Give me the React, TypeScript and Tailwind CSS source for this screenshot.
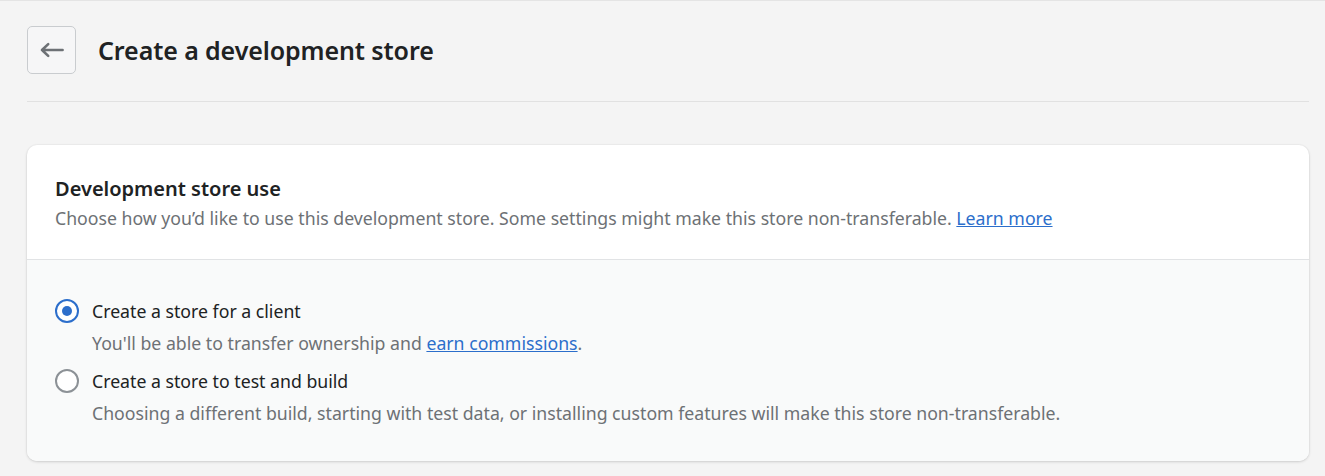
import React from "react";

export default function App() {
  return (
    <div
      className="min-h-[476px] w-full bg-[#f4f4f4] border-t border-[#e4e4e4] px-[27px] text-[#202223]"
      style={{ fontFamily: '"Noto Sans", "Open Sans", sans-serif' }}
    >
      <div className="flex items-center gap-[22px] pt-[25px] pb-[27px] border-b border-[#e1e1e1] w-[1282px]">
        <button className="w-[49px] h-[48px] flex items-center justify-center rounded-[5px] border border-[#c9cccf] bg-[#f6f6f7]">
          <svg width="24" height="24" viewBox="0 0 24 24" fill="none">
            <path d="M22.6 12H2M8.2 6.1L2 12l6.2 5.9" stroke="#6d7175" strokeWidth="2.6" strokeLinecap="round" strokeLinejoin="round" />
          </svg>
        </button>
        <h1 className="text-[25px] font-semibold leading-none tracking-[-0.1px]">Create a development store</h1>
      </div>
      <div className="mt-[43px] w-[1282px] rounded-[10px] bg-white shadow-[0_1px_3px_rgba(0,0,0,0.15),0_0_0_1px_rgba(0,0,0,0.02)] overflow-hidden">
        <div className="px-[28px] pt-[32px] pb-[29px] border-b border-[#e1e3e5]">
          <h2 className="text-[20px] font-semibold leading-[24px]">Development store use</h2>
          <p className="text-[17.7px] leading-[24px] text-[#6d7175] mt-[5px]">
            Choose how you’d like to use this development store. Some settings might make this store non-transferable.{" "}
            <a className="text-[#2c6ecb] underline">Learn more</a>
          </p>
        </div>
        <div className="bg-[#f9fafa] px-[28px] pt-[39px] pb-[36px]">
          <div className="flex items-center gap-[13px]">
            <span className="w-[24px] h-[24px] rounded-full border-2 border-[#2c6ecb] bg-white flex items-center justify-center">
              <span className="w-[10px] h-[10px] rounded-full bg-[#2c6ecb]" />
            </span>
            <span className="text-[17.7px] leading-[24px]">Create a store for a client</span>
          </div>
          <p className="ml-[37px] mt-[8px] text-[17.7px] leading-[24px] text-[#6d7175]">
            You'll be able to transfer ownership and <a className="text-[#2c6ecb] underline">earn commissions</a>.
          </p>
          <div className="flex items-center gap-[13px] mt-[14px]">
            <span className="w-[24px] h-[24px] rounded-full border-2 border-[#8c9196] bg-white" />
            <span className="text-[17.7px] leading-[24px]">Create a store to test and build</span>
          </div>
          <p className="ml-[37px] mt-[8px] text-[17.7px] leading-[24px] text-[#6d7175]">
            Choosing a different build, starting with test data, or installing custom features will make this store non-transferable.
          </p>
        </div>
      </div>
    </div>
  );
}
